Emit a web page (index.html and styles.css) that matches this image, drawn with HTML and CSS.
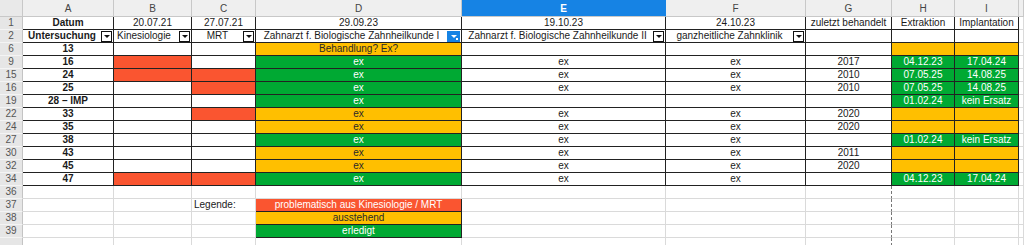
FILE: index.html
```html
<!DOCTYPE html>
<html lang="de">
<head>
<meta charset="utf-8">
<title>Tabelle</title>
<link rel="stylesheet" href="styles.css">
</head>
<body>
<div class="sheet">
  <!-- column header -->
  <div class="ch corner"></div>
  <div class="ch">A</div><div class="ch">B</div><div class="ch">C</div><div class="ch">D</div>
  <div class="ch sel">E</div><div class="ch">F</div><div class="ch">G</div><div class="ch">H</div><div class="ch">I</div><div class="ch"></div>

  <!-- row 1 -->
  <div class="rh">1</div>
  <div class="c d b">Datum</div><div class="c d">20.07.21</div><div class="c d">27.07.21</div><div class="c d">29.09.23</div><div class="c d">19.10.23</div><div class="c d">24.10.23</div><div class="c d">zuletzt behandelt</div><div class="c d">Extraktion</div><div class="c d">Implantation</div><div class="c"></div>

  <!-- row 2 -->
  <div class="rh">2</div>
  <div class="c d f"><span class="t b">Untersuchung</span><span class="dd"></span></div>
  <div class="c d f"><span class="t tl">Kinesiologie</span><span class="dd"></span></div>
  <div class="c d f"><span class="t">MRT</span><span class="dd"></span></div>
  <div class="c d f"><span class="t">Zahnarzt f. Biologische Zahnheilkunde I</span><span class="dd act"></span></div>
  <div class="c d f"><span class="t">Zahnarzt f. Biologische Zahnheilkunde II</span><span class="dd"></span></div>
  <div class="c d f"><span class="t">ganzheitliche Zahnklinik</span><span class="dd"></span></div>
  <div class="c d"></div><div class="c d"></div><div class="c d"></div><div class="c"></div>

  <!-- row 6 -->
  <div class="rh">6</div>
  <div class="c d b">13</div><div class="c d"></div><div class="c d"></div><div class="c d o">Behandlung? Ex?</div><div class="c d"></div><div class="c d"></div><div class="c d"></div><div class="c d o"></div><div class="c d o"></div><div class="c"></div>

  <!-- row 9 -->
  <div class="rh">9</div>
  <div class="c d b">16</div><div class="c d r"></div><div class="c d"></div><div class="c d g">ex</div><div class="c d">ex</div><div class="c d">ex</div><div class="c d">2017</div><div class="c d g">04.12.23</div><div class="c d g">17.04.24</div><div class="c"></div>

  <!-- row 15 -->
  <div class="rh">15</div>
  <div class="c d b">24</div><div class="c d r"></div><div class="c d r"></div><div class="c d g">ex</div><div class="c d">ex</div><div class="c d">ex</div><div class="c d">2010</div><div class="c d g">07.05.25</div><div class="c d g">14.08.25</div><div class="c"></div>

  <!-- row 16 -->
  <div class="rh">16</div>
  <div class="c d b">25</div><div class="c d"></div><div class="c d r"></div><div class="c d g">ex</div><div class="c d">ex</div><div class="c d">ex</div><div class="c d">2010</div><div class="c d g">07.05.25</div><div class="c d g">14.08.25</div><div class="c"></div>

  <!-- row 19 -->
  <div class="rh">19</div>
  <div class="c d b">28 – IMP</div><div class="c d"></div><div class="c d"></div><div class="c d g">ex</div><div class="c d"></div><div class="c d"></div><div class="c d"></div><div class="c d g">01.02.24</div><div class="c d g">kein Ersatz</div><div class="c"></div>

  <!-- row 22 -->
  <div class="rh">22</div>
  <div class="c d b">33</div><div class="c d"></div><div class="c d r"></div><div class="c d o">ex</div><div class="c d">ex</div><div class="c d">ex</div><div class="c d">2020</div><div class="c d o"></div><div class="c d o"></div><div class="c"></div>

  <!-- row 24 -->
  <div class="rh">24</div>
  <div class="c d b">35</div><div class="c d"></div><div class="c d"></div><div class="c d o">ex</div><div class="c d">ex</div><div class="c d">ex</div><div class="c d">2020</div><div class="c d o"></div><div class="c d o"></div><div class="c"></div>

  <!-- row 27 -->
  <div class="rh">27</div>
  <div class="c d b">38</div><div class="c d"></div><div class="c d"></div><div class="c d g">ex</div><div class="c d">ex</div><div class="c d">ex</div><div class="c d"></div><div class="c d g">01.02.24</div><div class="c d g">kein Ersatz</div><div class="c"></div>

  <!-- row 30 -->
  <div class="rh">30</div>
  <div class="c d b">43</div><div class="c d"></div><div class="c d"></div><div class="c d o">ex</div><div class="c d">ex</div><div class="c d">ex</div><div class="c d">2011</div><div class="c d o"></div><div class="c d o"></div><div class="c"></div>

  <!-- row 32 -->
  <div class="rh">32</div>
  <div class="c d b">45</div><div class="c d"></div><div class="c d"></div><div class="c d o">ex</div><div class="c d">ex</div><div class="c d">ex</div><div class="c d">2020</div><div class="c d o"></div><div class="c d o"></div><div class="c"></div>

  <!-- row 34 -->
  <div class="rh">34</div>
  <div class="c d b">47</div><div class="c d r"></div><div class="c d r"></div><div class="c d g">ex</div><div class="c d">ex</div><div class="c d">ex</div><div class="c d"></div><div class="c d g">04.12.23</div><div class="c d g">17.04.24</div><div class="c"></div>

  <!-- row 36 -->
  <div class="rh">36</div>
  <div class="c"></div><div class="c"></div><div class="c"></div><div class="c"></div><div class="c"></div><div class="c"></div><div class="c pb"></div><div class="c"></div><div class="c"></div><div class="c"></div>

  <!-- row 37 -->
  <div class="rh">37</div>
  <div class="c"></div><div class="c"></div><div class="c tl">Legende:</div><div class="c d r">problematisch aus Kinesiologie / MRT</div><div class="c"></div><div class="c"></div><div class="c pb"></div><div class="c"></div><div class="c"></div><div class="c"></div>

  <!-- row 38 -->
  <div class="rh">38</div>
  <div class="c"></div><div class="c"></div><div class="c"></div><div class="c d o">ausstehend</div><div class="c"></div><div class="c"></div><div class="c pb"></div><div class="c"></div><div class="c"></div><div class="c"></div>

  <!-- row 39 -->
  <div class="rh">39</div>
  <div class="c"></div><div class="c"></div><div class="c"></div><div class="c d g">erledigt</div><div class="c"></div><div class="c"></div><div class="c pb"></div><div class="c"></div><div class="c"></div><div class="c"></div>

  <!-- row 40 (partly visible) -->
  <div class="rh"></div>
  <div class="c"></div><div class="c"></div><div class="c"></div><div class="c"></div><div class="c"></div><div class="c"></div><div class="c pb"></div><div class="c"></div><div class="c"></div><div class="c"></div>
</div>
</body>
</html>
```

FILE: styles.css
```css
html, body {
  margin: 0;
  padding: 0;
  background: #ffffff;
  overflow: hidden;
}

.sheet {
  display: grid;
  grid-template-columns: 23px 91px 78px 64px 206px 204px 140px 86px 63px 64px 1fr;
  grid-template-rows: 17px;
  grid-auto-rows: 13px;
  font-family: "Liberation Sans", Arial, sans-serif;
  font-size: 10px;
  color: #1a1a1a;
  width: 1024px;
  height: 245px;
  overflow: hidden;
}

.ch {
  box-sizing: border-box;
  background: #efefef;
  border-right: 1px solid #c8c8c8;
  border-bottom: 1px solid #c8c8c8;
  color: #444;
  text-align: center;
  line-height: 16px;
  padding-top: 1px;
  font-size: 10px;
}

.ch.corner {
  background: #e9e9e9;
}

.ch.sel {
  background: #1683e4;
  color: #ffffff;
  font-weight: bold;
  border-right-color: #1683e4;
}

.rh {
  box-sizing: border-box;
  background: #e6e6e6;
  border-right: 1px solid #c4c4c4;
  border-bottom: 1px solid #f4f4f4;
  color: #555;
  text-align: center;
  line-height: 12px;
  font-size: 10px;
}

.c {
  box-sizing: border-box;
  border-right: 1px solid #dadada;
  border-bottom: 1px solid #dadada;
  text-align: center;
  line-height: 12px;
  white-space: nowrap;
  overflow: hidden;
  min-width: 0;
}

.c.d {
  border-right-color: #222;
  border-bottom-color: #222;
}

.b {
  font-weight: bold;
}

.tl {
  text-align: left;
  padding-left: 2px;
}

.r {
  background: #fa5530;
  color: #ffffff;
}

.o {
  background: #ffbf00;
  color: #2a2a2a;
}

.g {
  background: #00a933;
  color: #ffffff;
}

.pb {
  border-right: 1px dashed #777;
}

.f {
  display: flex;
  align-items: center;
}

.f .t {
  flex: 1;
  min-width: 0;
  overflow: hidden;
  text-align: center;
}

.f .t.tl {
  text-align: left;
  padding-left: 3px;
}

.dd {
  box-sizing: border-box;
  flex: none;
  width: 11px;
  height: 11px;
  margin-right: 1px;
  border: 1px solid #111;
  background: #ffffff;
  position: relative;
}

.dd::after {
  content: "";
  position: absolute;
  left: 2px;
  top: 3px;
  border-left: 3px solid transparent;
  border-right: 3px solid transparent;
  border-top: 3px solid #111;
}

.dd.act {
  width: 13px;
  background: #1683e4;
  border-color: #1683e4;
}

.dd.act::after {
  left: 3px;
  border-top-color: #ffffff;
}

.dd.act::before {
  content: "";
  position: absolute;
  right: 1px;
  bottom: 1px;
  width: 2px;
  height: 2px;
  background: #ffffff;
}
```
